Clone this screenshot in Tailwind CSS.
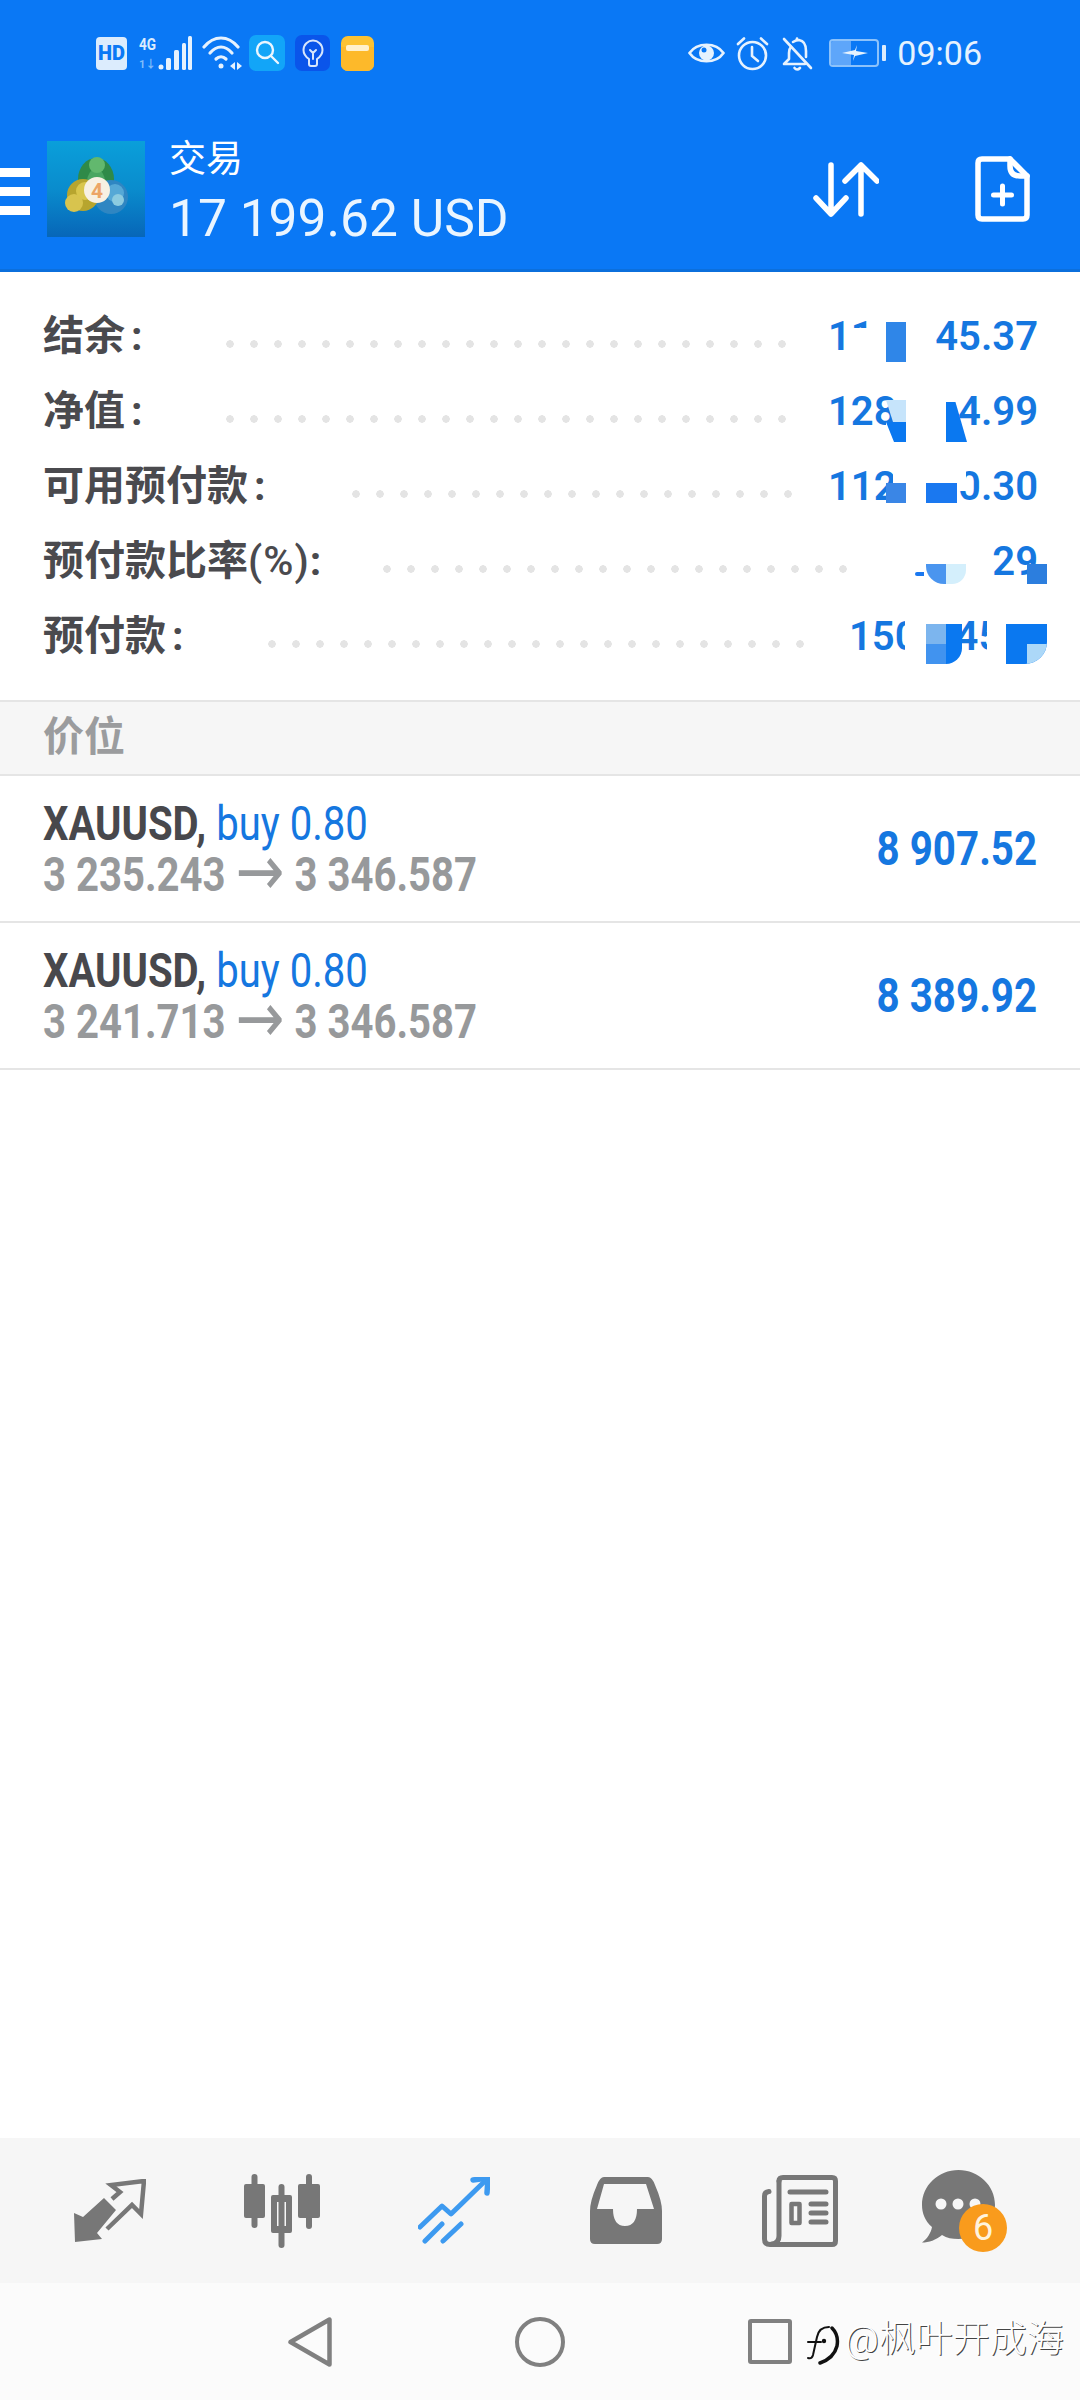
<!DOCTYPE html>
<html lang="zh">
<head>
    <meta charset="UTF-8">
    <meta name="viewport" content="width=device-width, initial-scale=1.0">
    <title>交易</title>
    <script src="https://cdn.jsdelivr.net/npm/@tailwindcss/browser@4"></script>
</head>
<body class="bg-white">
<div class="relative w-[1080px] h-[2400px] flex flex-col overflow-hidden font-['Roboto','Noto_Sans_CJK_SC',sans-serif]">

    <!-- Header -->
    <header class="h-[272px] bg-[#0a78f5] border-b-[3px] border-[#0b6fdc] text-white">
        <!-- Status bar -->
        <div class="flex justify-between items-center pt-[34px] h-[72px] pl-[96px] pr-[98px]">
            <div class="flex items-center">
                <div class="w-[31px] h-[33px] rounded-[4px] bg-[#dcecfd] text-[#0a78f5] text-[20px] font-black leading-[33px] text-center">HD</div>
                <div class="relative ml-[12px] w-[19px] h-[34px] text-[#dcecfd]">
                    <span class="absolute left-0 top-0 text-[17px] leading-[17px] font-bold scale-x-[.8] origin-left">4G</span>
                    <span class="absolute left-0 bottom-0 text-[11px] leading-[11px] font-bold text-[#7fbcfa]">1↓</span>
                </div>
                <svg class="w-[34px] h-[34px]" viewBox="0 0 34 34" fill="#e6f2fe">
                    <circle cx="3" cy="31" r="2.5"/><rect x="8" y="22" width="5" height="12" rx="1.5"/><rect x="16" y="14" width="5" height="20" rx="1.5"/><rect x="24" y="7" width="4" height="27" rx="1.5"/><rect x="30" y="0" width="4" height="34" rx="1.5"/>
                </svg>
                <svg class="ml-[10px] w-[40px] h-[34px]" viewBox="0 0 40 34" fill="none" stroke="#e6f2fe" stroke-width="3.2" stroke-linecap="round">
                    <path d="M2 11C12 -1 26 -1 36 11"/><path d="M8 17C15 9 23 9 30 17"/><path d="M14 23C17 20 21 20 24 23"/>
                    <circle cx="19" cy="30" r="2.5" fill="#e6f2fe" stroke="none"/>
                    <path d="M33 26L28 30L33 34ZM35 26L40 30L35 34Z" fill="#e6f2fe" stroke="none"/>
                </svg>
                <div class="ml-[7px] w-[36px] h-[36px] rounded-[7px] bg-[#12a5f8] flex items-center justify-center">
                    <svg class="w-[26px] h-[26px]" viewBox="0 0 26 26" fill="none" stroke="#eaf6ff" stroke-width="2.4" stroke-linecap="round"><circle cx="11" cy="10" r="8"/><path d="M17 16L24 23"/></svg>
                </div>
                <div class="ml-[10px] w-[35px] h-[36px] rounded-[7px] bg-[#0a55ea] flex items-center justify-center">
                    <svg class="w-[22px] h-[28px]" viewBox="0 0 22 28" fill="none" stroke="#d8e6fc" stroke-width="2" stroke-linecap="round" stroke-linejoin="round"><path d="M7 20C4 18 1.500 15 1.500 11C1.500 5.500 6 1.500 11 1.500C16 1.500 20.500 5.500 20.500 11C20.500 15 18 18 15 20V25Q15 27 13 27H9Q7 27 7 25Z"/><path d="M8 11L11 14L14 11M11 14V20"/></svg>
                </div>
                <div class="relative ml-[11px] w-[33px] h-[35px] rounded-[7px] bg-[#fcc233] overflow-hidden">
                    <div class="absolute left-0 top-[11px] w-full h-[24px] bg-[#fdb92a]"></div>
                    <div class="absolute left-[5px] top-[9px] w-[23px] h-[6px] rounded-[2px] bg-[#fff0cc]"></div>
                </div>
            </div>
            <div class="flex items-center">
                <svg class="w-[37px] h-[28px]" viewBox="0 0 37 28" fill="none" stroke="#e6f2fe" stroke-width="2.6"><path d="M1.500 14C9 3 28 3 35.500 14C28 25 9 25 1.500 14Z"/><circle cx="18.500" cy="14" r="7.500" fill="#e6f2fe" stroke="none"/><circle cx="16" cy="11" r="2.500" fill="#0a78f5" stroke="none"/></svg>
                <svg class="ml-[11px] w-[33px] h-[35px]" viewBox="0 0 33 35" fill="none" stroke="#e6f2fe" stroke-width="2.6" stroke-linecap="round"><circle cx="16.500" cy="19.500" r="13.500"/><path d="M16 11V20L22 25"/><path d="M2 8L8 2.500M31 8L25 2.500"/></svg>
                <svg class="ml-[13px] w-[31px] h-[35px]" viewBox="0 0 31 35" fill="none" stroke="#e6f2fe" stroke-width="2.6" stroke-linecap="round" stroke-linejoin="round"><path d="M2 3L29 32"/><path d="M9 11Q7 13 7 17V23L2 28H23"/><path d="M11 6Q14 4 17 4Q24 5 24 15V21"/><path d="M15 2.500V4"/><path d="M12.500 32Q15 35 18 32"/></svg>
                <div class="relative ml-[16px] w-[50px] h-[28px] rounded-[4px] border-2 border-[#8cc2fb] overflow-hidden">
                    <div class="absolute inset-y-0 left-0 w-[20px] bg-[#5ea6fa]"></div>
                    <svg class="absolute left-[11px] top-[4px] w-[26px] h-[16px]" viewBox="0 0 26 16" fill="#e6f2fe"><path d="M0 8L13 5L15 0L14 6L26 8L13 11L11 16L12 10Z"/></svg>
                </div>
                <div class="ml-[3px] w-[4px] h-[16px] rounded-[1px] bg-[#dcecfd]"></div>
                <span class="ml-[11px] text-[34px] leading-[38px] text-[#e6f2fe]">09:06</span>
            </div>
        </div>
        <!-- Title row -->
        <div class="flex items-center mt-[69px] h-[96px] pr-[50px]">
            <div class="w-[30px] flex flex-col gap-[10px] mt-[4px]">
                <div class="h-[9px] bg-white"></div>
                <div class="h-[9px] bg-white"></div>
                <div class="h-[9px] bg-white"></div>
            </div>
            <svg class="ml-[17px] w-[98px] h-[96px]" viewBox="0 0 98 96">
                <defs>
                    <linearGradient id="mt" x1="0" y1="0" x2="0" y2="1"><stop offset="0" stop-color="#0a9fda"/><stop offset=".5" stop-color="#0a8ccd"/><stop offset="1" stop-color="#0766b8"/></linearGradient>
                </defs>
                <rect width="98" height="96" fill="url(#mt)"/>
                <ellipse cx="49" cy="38" rx="18" ry="21" fill="#2f8a48"/>
                <ellipse cx="49" cy="41" rx="9" ry="13" fill="#4aa661"/>
                <circle cx="50" cy="24" r="8" fill="#62b86e"/>
                <circle cx="64" cy="56" r="17" fill="#2f86c2"/>
                <circle cx="68" cy="52" r="9" fill="#55a8d6"/>
                <circle cx="71" cy="59" r="6" fill="#8ccbe0"/>
                <circle cx="36" cy="54" r="16" fill="#b7a52e"/>
                <circle cx="38" cy="50" r="9" fill="#d9c64c"/>
                <circle cx="27" cy="62" r="9" fill="#d8c44e"/>
                <circle cx="50" cy="49" r="13" fill="#f7f0e2"/>
                <text x="50" y="57" text-anchor="middle" font-size="21" font-weight="700" fill="#eca566" font-family="Roboto">4</text>
            </svg>
            <div class="ml-[24px] mt-[10px] flex flex-col">
                <span class="text-[37px] leading-[42px]">交易</span>
                <span class="mt-[8px] text-[51.500px] leading-[60px] text-[#eaf5ff]">17 199.62 USD</span>
            </div>
            <svg class="ml-auto w-[66px] h-[55px]" viewBox="0 0 66 55" fill="none" stroke="white" stroke-width="5.500" stroke-linecap="round" stroke-linejoin="round">
                <path d="M18 3V52M3 36L18 52L33 36"/><path d="M48 52V3M32 19L48 3L64 19"/>
            </svg>
            <svg class="ml-[96px] w-[55px] h-[66px]" viewBox="0 0 55 66" fill="none" stroke="white" stroke-width="5.500" stroke-linejoin="round" stroke-linecap="round">
                <path d="M7 3H35V10Q35 20 45 20H52V59Q52 63 48 63H7Q3 63 3 59V7Q3 3 7 3Z"/><path d="M35 3L52 20"/><path d="M27.500 30V48M18.500 39H36.500" stroke-width="5"/>
            </svg>
        </div>
    </header>

    <!-- Account summary -->
    <section class="h-[428px] pt-[27px] pl-[43px] pr-[42px]">
        <div class="flex items-center h-[75px]">
            <span class="w-[175px] text-[41px] font-bold text-[#4a4a4e]">结余<span class="ml-[6px]">:</span></span>
            <div class="mt-[14px] w-[576px] h-[8px] bg-[radial-gradient(circle,#e4e4e4_3.500px,transparent_4px)] bg-[length:24px_8px] bg-repeat-x"></div>
            <div class="ml-auto w-[210px] flex justify-between text-[40px] font-semibold text-[#1577e0]"><span>11</span><span>45.37</span></div>
        </div>
        <div class="flex items-center h-[75px]">
            <span class="w-[175px] text-[41px] font-bold text-[#4a4a4e]">净值<span class="ml-[6px]">:</span></span>
            <div class="mt-[14px] w-[576px] h-[8px] bg-[radial-gradient(circle,#e4e4e4_3.500px,transparent_4px)] bg-[length:24px_8px] bg-repeat-x"></div>
            <div class="ml-auto w-[210px] flex justify-between text-[40px] font-semibold text-[#1577e0]"><span>128</span><span>4.99</span></div>
        </div>
        <div class="flex items-center h-[75px]">
            <span class="w-[301px] text-[41px] font-bold text-[#4a4a4e]">可用预付款<span class="ml-[6px]">:</span></span>
            <div class="mt-[14px] w-[456px] h-[8px] bg-[radial-gradient(circle,#e4e4e4_3.500px,transparent_4px)] bg-[length:24px_8px] bg-repeat-x"></div>
            <div class="ml-auto w-[210px] flex justify-between text-[40px] font-semibold text-[#1577e0]"><span>112</span><span>0.30</span></div>
        </div>
        <div class="flex items-center h-[75px]">
            <span class="w-[332px] text-[41px] font-bold text-[#4a4a4e]">预付款比率<span class="font-medium tracking-[1px]">(%)</span>:</span>
            <div class="mt-[14px] w-[480px] h-[8px] bg-[radial-gradient(circle,#e4e4e4_3.500px,transparent_4px)] bg-[length:24px_8px] bg-repeat-x"></div>
            <div class="ml-auto text-[40px] font-semibold text-[#1577e0]">29</div>
        </div>
        <div class="flex items-center h-[75px]">
            <span class="w-[217px] text-[41px] font-bold text-[#4a4a4e]">预付款<span class="ml-[6px]">:</span></span>
            <div class="mt-[14px] w-[552px] h-[8px] bg-[radial-gradient(circle,#e4e4e4_3.500px,transparent_4px)] bg-[length:24px_8px] bg-repeat-x"></div>
            <div class="ml-auto w-[189px] flex text-[40px] font-semibold text-[#1577e0]"><span>150</span><span class="ml-[38px]">45</span></div>
        </div>
    </section>

    <!-- Redacted mosaics over the amounts -->
    <div class="absolute left-[848px] top-[328px] w-[38px] h-[36px] bg-white"></div>
    <div class="absolute left-[886px] top-[322px] w-[20px] h-[40px] bg-[#2f86e8]"></div>

    <div class="absolute left-[886px] top-[400px] w-[20px] h-[22px] bg-[#c6e4fb] [clip-path:polygon(0_0,100%_0,100%_100%,35%_100%)]"></div>
    <div class="absolute left-[886px] top-[422px] w-[20px] h-[20px] bg-white"></div>
    <div class="absolute left-[886px] top-[422px] w-[20px] h-[20px] bg-[#0a78f0] [clip-path:polygon(0_0,100%_0,100%_100%,40%_100%)]"></div>
    <div class="absolute left-[906px] top-[400px] w-[50px] h-[44px] bg-white"></div>
    <div class="absolute left-[946px] top-[402px] w-[21px] h-[40px] bg-[#0a78f0] [clip-path:polygon(0_0,45%_0,100%_100%,0_100%)]"></div>

    <div class="absolute left-[893px] top-[470px] w-[73px] h-[13px] bg-white"></div>
    <div class="absolute left-[957px] top-[483px] w-[9px] h-[8px] bg-white"></div>
    <div class="absolute left-[886px] top-[483px] w-[20px] h-[20px] bg-[#3a86e6]"></div>
    <div class="absolute left-[926px] top-[483px] w-[31px] h-[20px] bg-[#1a78f0]"></div>

    <div class="absolute left-[915px] top-[572px] w-[9px] h-[4px] bg-[#1a78f0] rounded-l-full"></div>
    <div class="absolute left-[926px] top-[564px] w-[20px] h-[20px] bg-[#4a95ef] rounded-bl-[18px]"></div>
    <div class="absolute left-[946px] top-[564px] w-[20px] h-[20px] bg-[#d4effc] rounded-br-[14px]"></div>
    <div class="absolute left-[1027px] top-[564px] w-[20px] h-[20px] bg-[#2c7ede]"></div>

    <div class="absolute left-[905px] top-[618px] w-[21px] h-[46px] bg-white"></div>
    <div class="absolute left-[926px] top-[624px] w-[20px] h-[20px] bg-[#7cb5ee]"></div>
    <div class="absolute left-[926px] top-[644px] w-[20px] h-[20px] bg-[#4193ef]"></div>
    <div class="absolute left-[946px] top-[624px] w-[16px] h-[40px] bg-[#0a78f0] rounded-br-[16px]"></div>
    <div class="absolute left-[987px] top-[618px] w-[19px] h-[46px] bg-white"></div>
    <div class="absolute left-[1006px] top-[624px] w-[41px] h-[40px] bg-[#0a78f0] rounded-br-[22px] overflow-hidden">
        <div class="absolute right-0 bottom-0 w-[20px] h-[20px] bg-[#acd8f8]"></div>
    </div>

    <!-- Positions -->
    <div class="h-[76px] border-y-2 border-[#e5e5e5] bg-[#f6f6f6] pl-[43px] text-[41px] leading-[70px] font-bold text-[#9b9c9e]">价位</div>

    <div class="flex items-center h-[147px] border-b-2 border-[#e5e5e5] pl-[43px] pr-[43px]">
        <div class="whitespace-nowrap">
            <div class="origin-left scale-x-[.835] text-[48px] leading-[51px]"><span class="font-bold text-[#48484c]">XAUUSD,</span> <span class="text-[#1577e0]">buy 0.80</span></div>
            <div class="origin-left scale-x-[.835] text-[48px] leading-[51px] font-bold text-[#97999b]">3 235.243 <span class="relative top-[4px] text-[70px] leading-[0] font-normal font-['DejaVu_Sans']">→</span> 3 346.587</div>
        </div>
        <div class="ml-auto origin-right scale-x-[.84] text-[48px] font-bold text-[#1577e0] whitespace-nowrap">8 907.52</div>
    </div>
    <div class="flex items-center h-[147px] border-b-2 border-[#e5e5e5] pl-[43px] pr-[43px]">
        <div class="whitespace-nowrap">
            <div class="origin-left scale-x-[.835] text-[48px] leading-[51px]"><span class="font-bold text-[#48484c]">XAUUSD,</span> <span class="text-[#1577e0]">buy 0.80</span></div>
            <div class="origin-left scale-x-[.835] text-[48px] leading-[51px] font-bold text-[#97999b]">3 241.713 <span class="relative top-[4px] text-[70px] leading-[0] font-normal font-['DejaVu_Sans']">→</span> 3 346.587</div>
        </div>
        <div class="ml-auto origin-right scale-x-[.84] text-[48px] font-bold text-[#1577e0] whitespace-nowrap">8 389.92</div>
    </div>

    <div class="flex-1"></div>

    <!-- Tab bar -->
    <nav class="h-[145px] bg-[#f6f6f6] grid grid-cols-6 px-[24px] items-center justify-items-center">
        <svg class="w-[72px] h-[64px]" viewBox="0 0 72 64">
            <path d="M0 34L1 63L28 60L23 54L42 31L30 19L9 38Z" fill="#777"/>
            <path d="M38 20L46 13L37 6L70 2L67 35L58 26L33 50" fill="none" stroke="#777" stroke-width="4.500"/>
        </svg>
        <svg class="w-[76px] h-[74px]" viewBox="0 0 76 74" fill="#777">
            <rect x="7.500" y="0" width="6" height="54" rx="3"/><rect x="0" y="10" width="21" height="34" rx="2"/>
            <rect x="34.500" y="10" width="6" height="64" rx="3"/>
            <path fill-rule="evenodd" d="M29 21H46Q48 21 48 23V57Q48 59 46 59H29Q27 59 27 57V23Q27 21 29 21ZM33 28V52H42V28Z"/>
            <rect x="62" y="0" width="6" height="55" rx="3"/><rect x="54" y="10" width="22" height="34" rx="2"/>
        </svg>
        <svg class="w-[72px] h-[67px]" viewBox="0 0 72 67" fill="none" stroke="#3d9af0" stroke-width="5" stroke-linecap="round" stroke-linejoin="round">
            <path d="M2 50L24 29L33 37L67 4"/><path d="M55 3L70 1L69 16" stroke-width="5.500"/>
            <path d="M7 64L24 47M25 64L43 47"/>
        </svg>
        <svg class="w-[72px] h-[67px]" viewBox="0 0 72 67">
            <path fill="#777" fill-rule="evenodd" d="M14 0H58Q62 0 65 8Q72 24 72 34V62Q72 67 67 67H5Q0 67 0 62V34Q0 24 7 8Q10 0 14 0ZM14 7L7 32H23Q23 49 35 49Q47 49 47 32H64L56 7Z"/>
        </svg>
        <svg class="ml-[3px] w-[76px] h-[72px]" viewBox="0 0 76 72" fill="none" stroke="#777" stroke-width="5" stroke-linecap="round" stroke-linejoin="round">
            <path d="M17 6Q17 2.500 21 2.500H70Q73.500 2.500 73.500 6V66Q73.500 69.500 70 69.500H8Q2.500 69.500 2.500 64V21Q2.500 17 7 16.500"/>
            <path d="M17 6V61Q17 68 10 69"/>
            <path d="M28 17H64M49 29H64M49 38H64M49 47H64"/>
            <rect x="29.500" y="29" width="8" height="19" stroke-width="4.500"/>
        </svg>
        <div class="relative -ml-[10px] w-[86px] h-[81px]">
            <svg class="absolute left-0 top-0 w-[73px] h-[73px]" viewBox="0 0 73 73" fill="#777">
                <path d="M36.500 0C56.500 0 73 15.500 73 35C73 54.500 56.500 69 36.500 69C30 69 25 68 20 65C14 70 7 72.500 0 72.500C5 69 9 63 10 57C3 51 0 43 0 35C0 15.500 16.500 0 36.500 0Z"/>
                <circle cx="19" cy="34" r="5.500" fill="#f6f6f6"/><circle cx="36" cy="34" r="5.500" fill="#f6f6f6"/><circle cx="53" cy="34" r="5.500" fill="#f6f6f6"/>
            </svg>
            <div class="absolute left-[37px] top-[34px] w-[48px] h-[48px] rounded-full bg-[#f99b1c] text-[#fff3dd] text-[36px] leading-[48px] text-center">6</div>
        </div>
    </nav>

    <!-- System nav -->
    <div class="h-[117px] bg-[#fbfbfb] flex items-center justify-center gap-[183px]">
        <svg class="w-[44px] h-[50px]" viewBox="0 0 44 50" fill="none" stroke="#808080" stroke-width="4.500" stroke-linejoin="round"><path d="M41.500 2.500V47.500L2.500 25Z"/></svg>
        <div class="w-[50px] h-[50px] rounded-full border-[4.500px] border-[#808080]"></div>
        <div class="w-[44px] h-[45px] rounded-[3px] border-[4.500px] border-[#808080]"></div>
    </div>

    <!-- Watermark -->
    <div class="absolute left-[806px] top-[2315px] flex items-center text-[37px] leading-[40px] font-light text-white [text-shadow:1px_1px_0_#444]">
        <svg class="w-[34px] h-[40px] mt-[10px]" viewBox="0 0 34 40" fill="none" stroke="#111" stroke-width="2" stroke-linecap="round">
            <path d="M23 2Q13 2 11 12L7 30Q6 34 2 33"/><path d="M2 17H15"/><path d="M26 3Q33 10 31 21Q28 33 14 38" stroke-width="3.500"/><circle cx="18" cy="16" r="1.200" fill="#111"/>
        </svg>
        <span class="ml-[5px]">@枫叶开成海</span>
    </div>
</div>
</body>
</html>
